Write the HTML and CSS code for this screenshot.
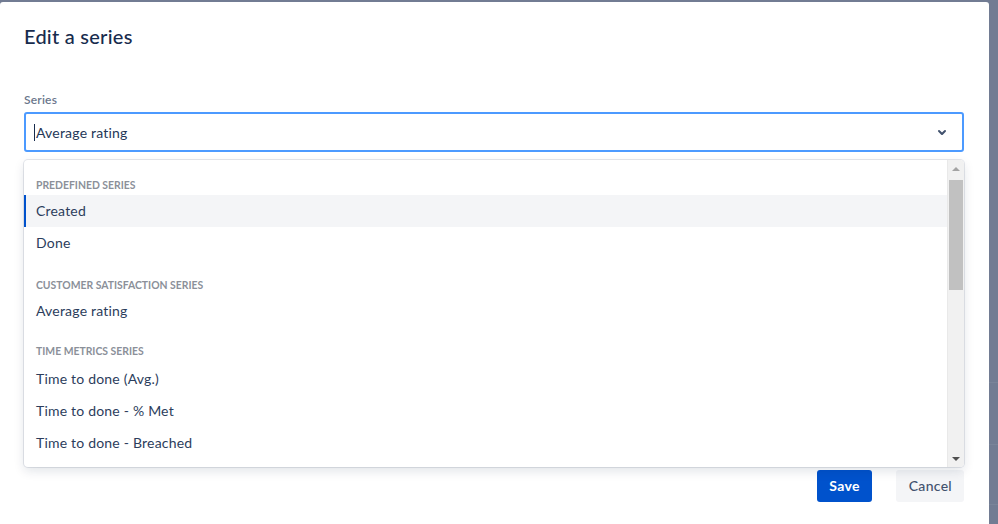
FILE: index.html
```html
<!DOCTYPE html>
<html lang="en">
<head>
<meta charset="utf-8">
<title>Edit a series</title>
<link rel="stylesheet" href="styles.css">
</head>
<body>
<div class="modal">
  <header class="modal-header">
    <h1 class="modal-title">Edit a series</h1>
  </header>
  <div class="modal-body">
    <label class="field-label">Series</label>
    <div class="field">
      <div class="select-control">
        <div class="select-value"><span class="caret"></span>Average rating</div>
        <div class="select-indicator">
          <svg width="24" height="24" viewBox="0 0 24 24" aria-hidden="true"><path fill="#42526e" d="M8.292 10.293a1.009 1.009 0 0 0 0 1.419l2.939 2.965c.218.215.5.322.779.322s.556-.107.769-.322l2.93-2.955a1.01 1.01 0 0 0 0-1.419.987.987 0 0 0-1.406 0l-2.298 2.317-2.307-2.327a.99.99 0 0 0-1.406 0z"/></svg>
        </div>
      </div>
      <div class="menu">
        <div class="menu-list">
          <div class="group">
            <div class="group-heading">Predefined series</div>
            <div class="option is-focused">Created</div>
            <div class="option">Done</div>
          </div>
          <div class="group">
            <div class="group-heading">Customer satisfaction series</div>
            <div class="option">Average rating</div>
          </div>
          <div class="group group-last">
            <div class="group-heading">Time metrics series</div>
            <div class="option">Time to done (Avg.)</div>
            <div class="option">Time to done - % Met</div>
            <div class="option">Time to done - Breached</div>
          </div>
        </div>
        <div class="scrollbar">
          <div class="sb-btn"><span class="tri-up"></span></div>
          <div class="sb-track"><div class="sb-thumb"></div></div>
          <div class="sb-btn"><span class="tri-down"></span></div>
        </div>
      </div>
    </div>
  </div>
  <footer class="modal-footer">
    <button class="btn btn-primary">Save</button>
    <button class="btn btn-subtle">Cancel</button>
  </footer>
</div>
</body>
</html>
```

FILE: styles.css
```css
* { box-sizing: border-box; }

html, body {
  margin: 0;
  height: 100%;
  overflow: hidden;
}

body {
  padding-top: 2px;
  background-color: #727c93;
  background-image:
    linear-gradient(#7a8499, #7a8499),
    linear-gradient(#7a8499, #7a8499),
    linear-gradient(#7a8499, #7a8499);
  background-size: 100% 1px, 100% 1px, 100% 1px;
  background-position: 0 382px, 0 444px, 0 504px;
  background-repeat: no-repeat;
  font-family: Lato, "Noto Sans", sans-serif;
  letter-spacing: 0.2px;
  color: #172b4d;
}

.modal {
  width: 989px;
  height: 540px;
  background: #ffffff;
  border-radius: 3px;
  padding: 0 25px 0 24px;
  display: flex;
  flex-direction: column;
}

.modal-header {
  padding-top: 22px;
}

.modal-title {
  margin: 0;
  font-size: 20px;
  line-height: 24px;
  font-weight: 500;
  letter-spacing: 0.25px;
  color: #172b4d;
}

.modal-body {
  padding-top: 44px;
  height: 422px;
}

.field-label {
  display: block;
  font-size: 12px;
  line-height: 16px;
  font-weight: 600;
  color: #6b778c;
  margin-bottom: 4px;
}

.field {
  position: relative;
}

.select-control {
  height: 40px;
  border: 2px solid #4c9aff;
  border-radius: 3px;
  background: #ffffff;
  display: flex;
  align-items: center;
}

.select-value {
  flex: 1;
  padding-left: 8px;
  font-size: 14px;
  color: #253858;
  display: flex;
  align-items: center;
}

.caret {
  display: inline-block;
  width: 1px;
  height: 17px;
  background: #172b4d;
  margin-right: 1px;
}

.select-indicator {
  padding: 0 8px;
  display: flex;
  align-items: center;
}

.menu {
  position: absolute;
  top: calc(100% + 8px);
  left: 0;
  right: 0;
  height: 307px;
  background: #ffffff;
  border-radius: 4px;
  box-shadow: 0 0 0 1px rgba(9, 30, 66, 0.1), 0 4px 11px rgba(9, 30, 66, 0.12);
  display: flex;
  overflow: hidden;
}

.menu-list {
  flex: 1;
  padding-top: 8px;
  overflow: hidden;
}

.group {
  padding: 9px 0;
}

.group + .group-last {
  padding-top: 7px;
}

.group-heading {
  padding: 0 12px;
  margin-bottom: 2px;
  font-size: 10.4px;
  line-height: 16px;
  font-weight: 700;
  letter-spacing: 0;
  text-transform: uppercase;
  color: #8b9099;
}

.group-last .group-heading {
  margin-bottom: 4px;
}

.option {
  height: 32px;
  line-height: 32px;
  padding: 0 12px;
  font-size: 14px;
  color: #2c3d5c;
}

.option.is-focused {
  background: #f4f5f7;
  box-shadow: inset 2px 0 0 #0052cc;
}

.scrollbar {
  width: 17px;
  background: #f1f1f1;
  display: flex;
  flex-direction: column;
  border-left: 1px solid #e9e9e9;
}

.sb-btn {
  height: 17px;
  display: flex;
  align-items: center;
  justify-content: center;
}

.sb-track {
  flex: 1;
  padding: 3px 1px 0 1px;
}

.sb-thumb {
  height: 110px;
  background: #c1c1c1;
}

.tri-up {
  width: 0;
  height: 0;
  border-left: 4px solid transparent;
  border-right: 4px solid transparent;
  border-bottom: 4px solid #a3a3a3;
}

.tri-down {
  width: 0;
  height: 0;
  border-left: 4px solid transparent;
  border-right: 4px solid transparent;
  border-top: 4px solid #505050;
}

.modal-footer {
  display: flex;
  justify-content: flex-end;
  gap: 24px;
}

.btn {
  height: 32px;
  padding: 0 12px;
  border: none;
  border-radius: 3px;
  font-family: Lato, "Noto Sans", sans-serif;
  font-size: 14px;
  letter-spacing: 0.3px;
  line-height: 32px;
  cursor: pointer;
}

.btn-primary {
  background: #0052cc;
  color: #ffffff;
  font-weight: 700;
}

.btn-subtle {
  background: #f4f5f7;
  color: #42526e;
  font-weight: 500;
  padding: 0 12px 0 13px;
}
```
